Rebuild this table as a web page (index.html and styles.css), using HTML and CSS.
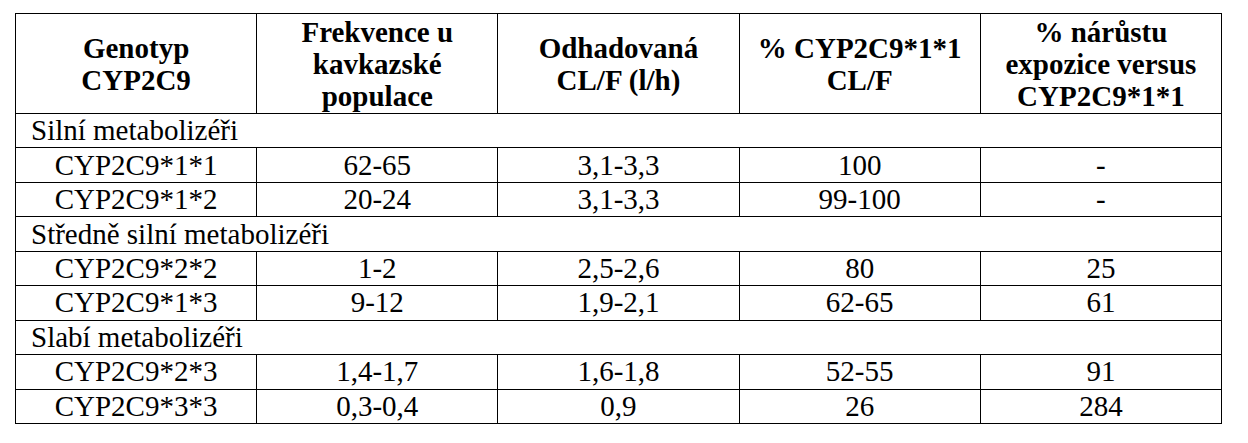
FILE: index.html
```html
<!DOCTYPE html>
<html lang="cs">
<head>
<meta charset="utf-8">
<title>CYP2C9</title>
<link rel="stylesheet" href="styles.css">
</head>
<body>
<div class="page">
<table class="geno">
  <colgroup>
    <col class="c"><col class="c"><col class="c"><col class="c"><col class="c">
  </colgroup>
  <thead>
    <tr class="head">
      <th>Genotyp<br>CYP2C9</th>
      <th>Frekvence u<br>kavkazské<br>populace</th>
      <th>Odhadovaná<br>CL/F (l/h)</th>
      <th>% CYP2C9*1*1<br>CL/F</th>
      <th>% nárůstu<br>expozice versus<br>CYP2C9*1*1</th>
    </tr>
  </thead>
  <tbody>
    <tr class="group"><td colspan="5">Silní metabolizéři</td></tr>
    <tr class="row"><td>CYP2C9*1*1</td><td>62-65</td><td>3,1-3,3</td><td>100</td><td>-</td></tr>
    <tr class="row"><td>CYP2C9*1*2</td><td>20-24</td><td>3,1-3,3</td><td>99-100</td><td>-</td></tr>
    <tr class="group"><td colspan="5">Středně silní metabolizéři</td></tr>
    <tr class="row"><td>CYP2C9*2*2</td><td>1-2</td><td>2,5-2,6</td><td>80</td><td>25</td></tr>
    <tr class="row"><td>CYP2C9*1*3</td><td>9-12</td><td>1,9-2,1</td><td>62-65</td><td>61</td></tr>
    <tr class="group"><td colspan="5">Slabí metabolizéři</td></tr>
    <tr class="row"><td>CYP2C9*2*3</td><td>1,4-1,7</td><td>1,6-1,8</td><td>52-55</td><td>91</td></tr>
    <tr class="row"><td>CYP2C9*3*3</td><td>0,3-0,4</td><td>0,9</td><td>26</td><td>284</td></tr>
  </tbody>
</table>
</div>
</body>
</html>
```
FILE: styles.css
```css
html, body {
  margin: 0;
  padding: 0;
  background: #ffffff;
}
.page {
  padding: 13px 0 0 15px;
}
.geno {
  border-collapse: collapse;
  table-layout: fixed;
  width: 1207px;
  font-family: "Liberation Serif", "Times New Roman", serif;
  font-size: 29px;
  color: #000;
}
.geno .c {
  width: 20%;
}
.geno th,
.geno td {
  border: 1px solid #000;
  padding: 0;
  text-align: center;
  vertical-align: middle;
}
.geno th {
  font-weight: bold;
  line-height: 32px;
}
.head {
  height: 100px;
}
.row td,
.group td {
  line-height: 33px;
}
.row,
.group {
  height: 34.45px;
}
.group td {
  text-align: left;
  padding-left: 15px;
}
```
